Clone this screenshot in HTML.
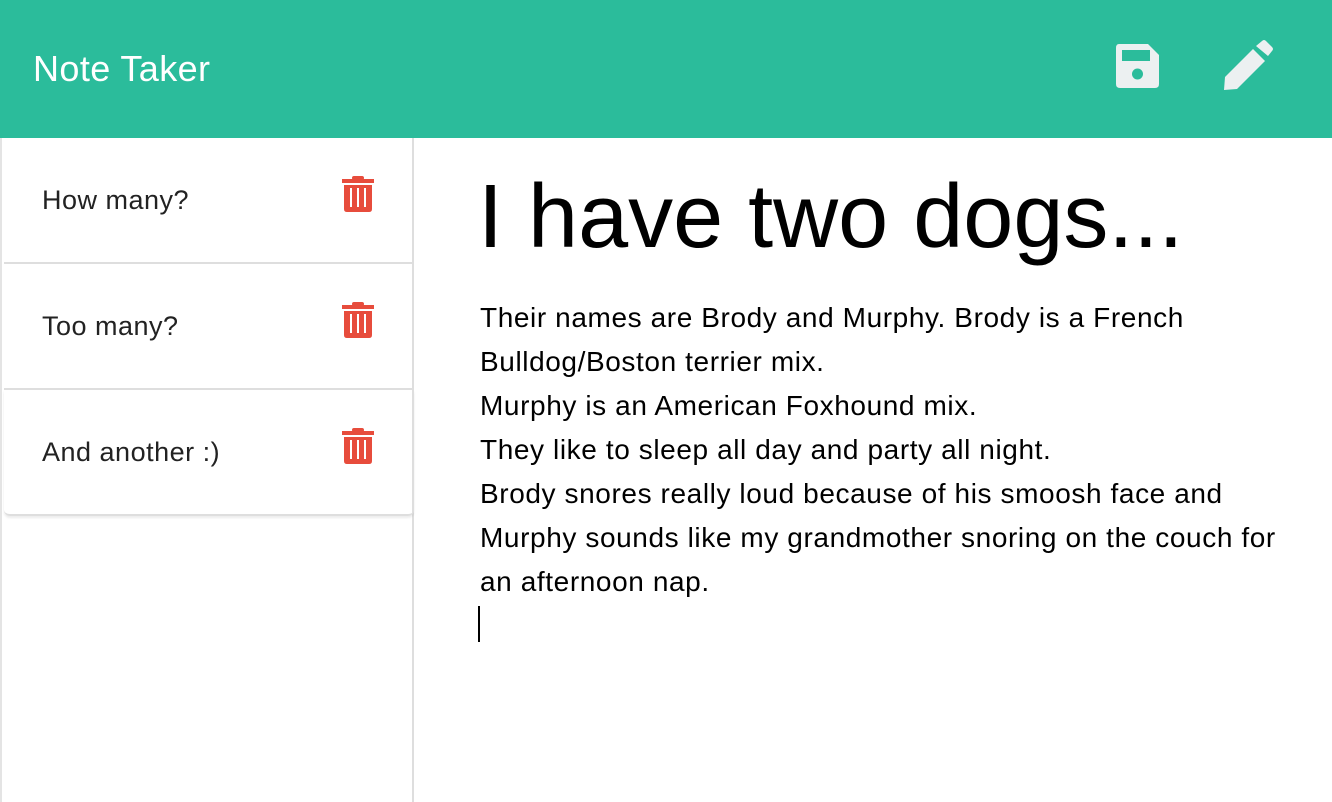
<!DOCTYPE html>
<html><head><meta charset="utf-8"><style>
*{margin:0;padding:0;box-sizing:border-box}
body{width:1332px;height:802px;overflow:hidden;background:#fff;font-family:"Liberation Sans",sans-serif;color:#222;position:relative}
.hdr{position:absolute;left:0;top:0;width:1332px;height:138px;background:#2bbc9b}
.hdr .t{position:absolute;left:33px;top:48px;color:#fff;font-size:36px;letter-spacing:0.4px}
.side{position:absolute;left:0;top:138px;width:414px;height:664px;border-right:2px solid #dedede;border-left:2px solid #e4e4e4}
.item{position:absolute;left:2px;width:410px;height:126px;border-bottom:2px solid #dedede;font-size:27px;color:#222}
.item span{position:absolute;left:38px;top:47px;letter-spacing:0.5px}
.item svg{position:absolute;left:338px;top:38px}
.last{border-radius:0 0 6px 6px;box-shadow:0 2px 2px rgba(0,0,0,.08)}
h1{position:absolute;left:478px;top:166px;font-size:90px;font-weight:normal;color:#000;white-space:nowrap}
.body{position:absolute;left:480px;top:296px;font-size:28px;line-height:44px;color:#000;letter-spacing:0.6px;white-space:nowrap}
.cur{position:absolute;left:478px;top:606px;width:2px;height:36px;background:#000}
</style></head><body>
<div class="hdr"><div class="t">Note Taker</div>
<svg style="position:absolute;left:1116px;top:44px" width="43" height="44" viewBox="0 0 43 44"><path d="M3 0H32L43 11V40Q43 44 39 44H4Q0 44 0 40V4Q0 0 3 0Z" fill="#ecf0f1"/><rect x="6" y="6" width="28" height="11" fill="#2bbc9b"/><circle cx="21.5" cy="30" r="5.5" fill="#2bbc9b"/></svg>
<svg style="position:absolute;left:1222px;top:40px" width="52" height="52" viewBox="0 0 52 52"><path d="M3 37L31 9L43 21L15 49L2 50Z" fill="#ecf0f1"/><path d="M34 6L40 1Q42 -1 44 1L50 7Q52 9 50 11L46 16Z" fill="#ecf0f1"/></svg>
</div>
<div class="side">
<div class="item" style="top:0"><span>How many?</span><svg width="32" height="36" viewBox="0 0 32 36"><rect x="0" y="3" width="32" height="4" fill="#e74c3c"/><rect x="10" y="0" width="12" height="4" rx="2" fill="#e74c3c"/><path d="M2 9H30V33Q30 36 27 36H5Q2 36 2 33Z" fill="#e74c3c"/><rect x="8" y="12" width="2" height="19" fill="#fff"/><rect x="15" y="12" width="2" height="19" fill="#fff"/><rect x="22" y="12" width="2" height="19" fill="#fff"/></svg></div>
<div class="item" style="top:126px"><span>Too many?</span><svg width="32" height="36" viewBox="0 0 32 36"><rect x="0" y="3" width="32" height="4" fill="#e74c3c"/><rect x="10" y="0" width="12" height="4" rx="2" fill="#e74c3c"/><path d="M2 9H30V33Q30 36 27 36H5Q2 36 2 33Z" fill="#e74c3c"/><rect x="8" y="12" width="2" height="19" fill="#fff"/><rect x="15" y="12" width="2" height="19" fill="#fff"/><rect x="22" y="12" width="2" height="19" fill="#fff"/></svg></div>
<div class="item last" style="top:252px"><span>And another :)</span><svg width="32" height="36" viewBox="0 0 32 36"><rect x="0" y="3" width="32" height="4" fill="#e74c3c"/><rect x="10" y="0" width="12" height="4" rx="2" fill="#e74c3c"/><path d="M2 9H30V33Q30 36 27 36H5Q2 36 2 33Z" fill="#e74c3c"/><rect x="8" y="12" width="2" height="19" fill="#fff"/><rect x="15" y="12" width="2" height="19" fill="#fff"/><rect x="22" y="12" width="2" height="19" fill="#fff"/></svg></div>
</div>
<h1>I have two dogs...</h1>
<div class="body">Their names are Brody and Murphy. Brody is a French<br>Bulldog/Boston terrier mix.<br>Murphy is an American Foxhound mix.<br>They like to sleep all day and party all night.<br>Brody snores really loud because of his smoosh face and<br>Murphy sounds like my grandmother snoring on the couch for<br>an afternoon nap.</div>
<div class="cur"></div>
</body></html>
